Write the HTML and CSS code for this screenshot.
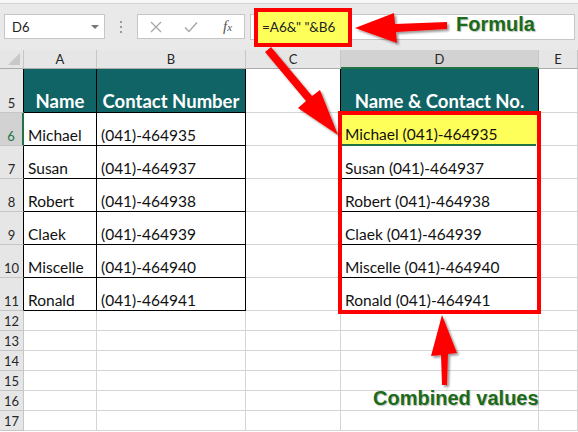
FILE: index.html
```html
<!DOCTYPE html>
<html>
<head>
<meta charset="utf-8">
<link rel="stylesheet" href="styles.css">
</head>
<body>
<div class="app">
  <div class="topstrip"></div>
  <div class="fbar">
    <div class="namebox"><span class="nbtext">D6</span><span class="dd"></span></div>
    <div class="sep"><i></i><i></i><i></i></div>
    <div class="fxbox">
      <svg class="ico" width="12" height="12" viewBox="0 0 12 12"><path d="M1 1L11 11M11 1L1 11" stroke="#a6a6a6" stroke-width="1.3" fill="none"/></svg>
      <svg class="ico" width="14" height="12" viewBox="0 0 14 12"><path d="M1 6.5L5 10.5L13 1.5" stroke="#a6a6a6" stroke-width="1.4" fill="none"/></svg>
      <span class="fx"><i>f</i><i class="fxx">x</i></span>
    </div>
    <div class="finput"></div>
  </div>

  <div class="grid">
    <div class="corner"><span class="tri"></span></div>
    <div class="ch">A</div>
    <div class="ch">B</div>
    <div class="ch">C</div>
    <div class="ch chsel">D</div>
    <div class="ch">E</div>

    <div class="rh rt">5</div>
    <div class="th">Name</div>
    <div class="th">Contact Number</div>
    <div class="c cb"></div>
    <div class="th">Name &amp; Contact No.</div>
    <div class="c"></div>

    <div class="rh rt rsel">6</div>
    <div class="t">Michael</div>
    <div class="t">(041)-464935</div>
    <div class="c cb"></div>
    <div class="t dsel">Michael (041)-464935<span class="handle"></span></div>
    <div class="c"></div>

    <div class="rh rt">7</div>
    <div class="t">Susan</div>
    <div class="t">(041)-464937</div>
    <div class="c cb"></div>
    <div class="t">Susan (041)-464937</div>
    <div class="c"></div>

    <div class="rh rt">8</div>
    <div class="t">Robert</div>
    <div class="t">(041)-464938</div>
    <div class="c cb"></div>
    <div class="t">Robert (041)-464938</div>
    <div class="c"></div>

    <div class="rh rt">9</div>
    <div class="t">Claek</div>
    <div class="t">(041)-464939</div>
    <div class="c cb"></div>
    <div class="t">Claek (041)-464939</div>
    <div class="c"></div>

    <div class="rh rt">10</div>
    <div class="t">Miscelle</div>
    <div class="t">(041)-464940</div>
    <div class="c cb"></div>
    <div class="t">Miscelle (041)-464940</div>
    <div class="c"></div>

    <div class="rh rt">11</div>
    <div class="t">Ronald</div>
    <div class="t">(041)-464941</div>
    <div class="c cb"></div>
    <div class="t">Ronald (041)-464941</div>
    <div class="c"></div>

    <div class="rh">12</div><div class="c"></div><div class="c"></div><div class="c"></div><div class="c"></div><div class="c"></div>
    <div class="rh">13</div><div class="c"></div><div class="c"></div><div class="c"></div><div class="c"></div><div class="c"></div>
    <div class="rh">14</div><div class="c"></div><div class="c"></div><div class="c"></div><div class="c"></div><div class="c"></div>
    <div class="rh">15</div><div class="c"></div><div class="c"></div><div class="c"></div><div class="c"></div><div class="c"></div>
    <div class="rh">16</div><div class="c"></div><div class="c"></div><div class="c"></div><div class="c"></div><div class="c"></div>
    <div class="rh">17</div><div class="c"></div><div class="c"></div><div class="c"></div><div class="c"></div><div class="c"></div>
  </div>

  <div class="formula-hl">=A6&amp;" "&amp;B6</div>
  <div class="label label-formula">Formula</div>
  <div class="redbox"></div>
  <div class="label label-combined">Combined values</div>

  <svg class="arrows" width="578" height="432" viewBox="0 0 578 432">
    <defs>
      <filter id="sh" x="-20%" y="-20%" width="140%" height="140%">
        <feDropShadow dx="2" dy="2" stdDeviation="1.2" flood-color="#000" flood-opacity="0.4"/>
      </filter>
    </defs>
    <polygon filter="url(#sh)" fill="#ff0000" points="355,28 394,13 395,24 447,22 447,29 396,32 397,43"/>
    <polygon filter="url(#sh)" fill="#ff0000" points="265,52 271,47 312,96 320,90 338,135 298,108 306,101"/>
    <polygon filter="url(#sh)" fill="#ff0000" points="442,315 457,353 448,354 447,385 442,385 441,355 431,356"/>
  </svg>
</div>
</body>
</html>
```

FILE: styles.css
```css
* { box-sizing: border-box; }
html, body { margin: 0; padding: 0; }
body { background: #ffffff; }

.app {
  position: relative;
  width: 578px;
  height: 432px;
  overflow: hidden;
  background: #ffffff;
  font-family: "Lato", "Open Sans", sans-serif;
}

.topstrip {
  height: 4px;
  background: #f7f7f7;
  border-bottom: 1px solid #d4d4d4;
}

.fbar {
  height: 46px;
  background: #e9e9e9;
  display: flex;
  align-items: flex-start;
  padding-top: 10px;
}

.namebox {
  margin-left: 4px;
  width: 101px;
  height: 25px;
  background: #fff;
  border: 1px solid #c6c6c6;
  display: flex;
  align-items: center;
  justify-content: space-between;
  padding: 0 5px 0 7px;
}
.nbtext {
  font-family: "Lato", sans-serif;
  font-size: 13px;
  color: #222;
}
.dd {
  width: 0; height: 0;
  border-left: 4px solid transparent;
  border-right: 4px solid transparent;
  border-top: 4px solid #777;
}

.sep {
  width: 32px;
  height: 25px;
  display: flex;
  flex-direction: column;
  align-items: center;
  justify-content: center;
  gap: 3px;
}
.sep i {
  display: block;
  width: 2px;
  height: 2px;
  background: #9a9a9a;
}

.fxbox {
  width: 108px;
  height: 25px;
  background: #fff;
  border: 1px solid #c6c6c6;
  display: flex;
  align-items: center;
  padding-left: 12px;
  gap: 22px;
}
.ico { display: block; }
.fx {
  font-family: "Liberation Serif", serif;
  font-style: italic;
  font-size: 15px;
  color: #555;
  margin-left: 3px;
}
.fx i { font-style: italic; }
.fxx { font-size: 11px; }

.finput {
  margin-left: 5px;
  width: 325px;
  height: 26px;
  background: #fff;
  border: 1px solid #c6c6c6;
}

.grid {
  display: grid;
  grid-template-columns: 24px 73px 149px 95px 198px 39px;
  grid-template-rows: 19px 44px repeat(6, 33px) repeat(6, 20px);
  font-family: "Lato", sans-serif;
}

.corner {
  background: #e6e6e6;
  border-right: 1px solid #c6c6c6;
  border-bottom: 1px solid #ababab;
  position: relative;
}
.tri {
  position: absolute;
  right: 3px;
  bottom: 3px;
  width: 0; height: 0;
  border-left: 12px solid transparent;
  border-bottom: 12px solid #c8c8c8;
}

.ch {
  background: #e6e6e6;
  border-right: 1px solid #c6c6c6;
  border-bottom: 1px solid #ababab;
  font-size: 13px;
  color: #262626;
  display: flex;
  align-items: center;
  justify-content: center;
}
.chsel {
  background: #d2d2d2;
  border-bottom: 2px solid #217346;
}

.rh {
  background: #e6e6e6;
  border-right: 1px solid #c6c6c6;
  border-bottom: 1px solid #c6c6c6;
  font-size: 13px;
  color: #262626;
  display: flex;
  align-items: flex-end;
  justify-content: center;
  padding-bottom: 1px;
  line-height: 16px;
}
.rt { border-right-color: #000; }
.rsel {
  background: #d2d2d2;
  border-right: 2px solid #217346;
  color: #217346;
}

.c {
  border-right: 1px solid #d4d4d4;
  border-bottom: 1px solid #d4d4d4;
}
.cb { border-right-color: #000; }

.th {
  background: #116466;
  color: #ffffff;
  font-weight: 700;
  font-size: 18.5px;
  border-right: 1px solid #000;
  border-bottom: 1px solid #000;
  display: flex;
  align-items: flex-end;
  justify-content: center;
  line-height: 20px;
  padding-bottom: 1px;
  white-space: nowrap;
}

.t {
  position: relative;
  border-right: 1px solid #000;
  border-bottom: 1px solid #000;
  font-size: 15.5px;
  color: #111;
  display: flex;
  align-items: flex-end;
  padding-left: 4px;
  line-height: 18px;
  padding-bottom: 1px;
  white-space: nowrap;
}
.dsel {
  background: #ffff5a;
  border-right: 2px solid #217346;
  border-bottom: 2px solid #217346;
}
.handle {
  position: absolute;
  right: -4px;
  bottom: -4px;
  width: 5px;
  height: 5px;
  background: #217346;
  border: 1px solid #fff;
}

.formula-hl {
  position: absolute;
  left: 254px;
  top: 8px;
  width: 98px;
  height: 39px;
  background: #ffff5a;
  border: 4px solid #ff0000;
  font-family: "Lato", sans-serif;
  font-size: 13.5px;
  color: #222;
  padding-left: 4px;
  line-height: 31px;
  white-space: nowrap;
}

.redbox {
  position: absolute;
  left: 338px;
  top: 111px;
  width: 203px;
  height: 203px;
  border: 4px solid #ff0000;
}

.label {
  position: absolute;
  font-family: "Liberation Sans", Arial, sans-serif;
  font-weight: 700;
  font-size: 20px;
  color: #1a6b1a;
  white-space: nowrap;
  text-shadow: 1px 1px 1px rgba(0,0,0,0.25);
}
.label-formula { left: 456px; top: 13px; }
.label-combined { left: 373px; top: 387px; }

.arrows {
  position: absolute;
  left: 0;
  top: 0;
  pointer-events: none;
}
```
